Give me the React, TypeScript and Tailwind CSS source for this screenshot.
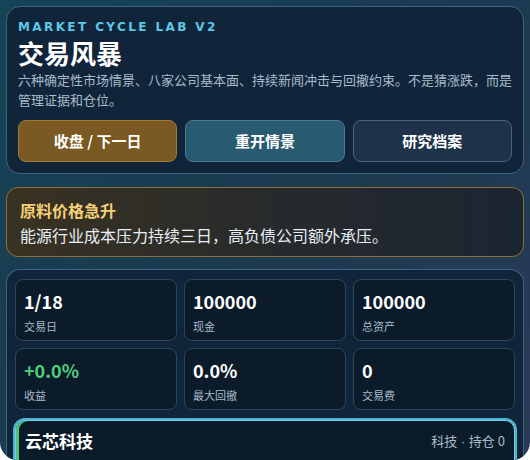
import React from "react";

const font = { fontFamily: '"Noto Sans CJK SC", "Noto Sans", sans-serif' };

function Stat({ value, label, green }: { value: string; label: string; green?: boolean }) {
  return (
    <div className="rounded-lg border border-[#2b475d] bg-[#0b1b2a] px-[8px] pt-[10px] pb-[8px] h-[62px]">
      <div className={`text-[18px] font-bold leading-[22px] ${green ? "text-[#4fcf7a]" : "text-white"}`}>{value}</div>
      <div className="mt-[7px] text-[11px] leading-[14px] text-[#a9bccb]">{label}</div>
    </div>
  );
}

export default function App() {
  return (
    <div style={font} className="h-[460px] overflow-hidden rounded-b-[18px] bg-[linear-gradient(135deg,#154456_0%,#1b3a50_50%,#2c3a57_100%)] p-[6px] flex flex-col gap-[12px]">
      <div className="rounded-[14px] border border-[#3d6580] bg-[#11253a] px-[11px] pt-[12px] pb-[11px]">
        <div className="text-[12px] font-bold tracking-[0.2em] leading-[16px] text-[#5cc8e8]" style={{ fontFamily: '"DejaVu Sans", sans-serif' }}>MARKET CYCLE LAB V2</div>
        <div className="mt-[2px] text-[26px] font-bold leading-[32px] text-white">交易风暴</div>
        <div className="mt-[1px] text-[13px] leading-[20px] text-[#a9bccb]">六种确定性市场情景、八家公司基本面、持续新闻冲击与回撤约束。不是猜涨跌，而是管理证据和仓位。</div>
        <div className="mt-[10px] grid grid-cols-3 gap-[8px]">
          <button className="h-[42px] rounded-lg border border-[#a27b32] bg-[#7a5a22] text-[15px] font-bold text-white">收盘 / 下一日</button>
          <button className="h-[42px] rounded-lg border border-[#4b7b92] bg-[#285a70] text-[15px] font-bold text-white">重开情景</button>
          <button className="h-[42px] rounded-lg border border-[#48677e] bg-[#1e3249] text-[15px] font-bold text-white">研究档案</button>
        </div>
      </div>

      <div className="mt-[1px] rounded-[12px] border border-[#8a7038] bg-[linear-gradient(90deg,#3a3222_0%,#262a2c_55%,#1b2532_100%)] px-[13px] pt-[11px] pb-[10px]">
        <div className="text-[16px] font-bold leading-[22px] text-[#f4cf76]">原料价格急升</div>
        <div className="mt-[3px] text-[16px] leading-[22px] text-[#e8eef5]">能源行业成本压力持续三日，高负债公司额外承压。</div>
      </div>

      <div className="flex-1 rounded-t-[14px] border border-b-0 border-[#3d6580] bg-[#11253a] px-[8px] pt-[9px]">
        <div className="grid grid-cols-3 gap-[7px]">
          <Stat value="1/18" label="交易日" />
          <Stat value="100000" label="现金" />
          <Stat value="100000" label="总资产" />
          <Stat value="+0.0%" label="收益" green />
          <Stat value="0.0%" label="最大回撤" />
          <Stat value="0" label="交易费" />
        </div>
        <div className="mt-[10px] rounded-[10px] border border-[#6fd0e8] bg-[#0b1b2a] shadow-[0_0_0_2px_#4fb3d2,inset_3px_0_0_#4cc27c] px-[9px] pt-[8px] h-[60px]">
          <div className="flex items-center justify-between">
            <div className="text-[17px] font-bold leading-[24px] text-white">云芯科技</div>
            <div className="text-[13px] leading-[20px] text-[#a9bccb]">科技<span style={{ fontFamily: '"Liberation Sans", sans-serif' }}> · </span>持仓 0</div>
          </div>
        </div>
      </div>
    </div>
  );
}
